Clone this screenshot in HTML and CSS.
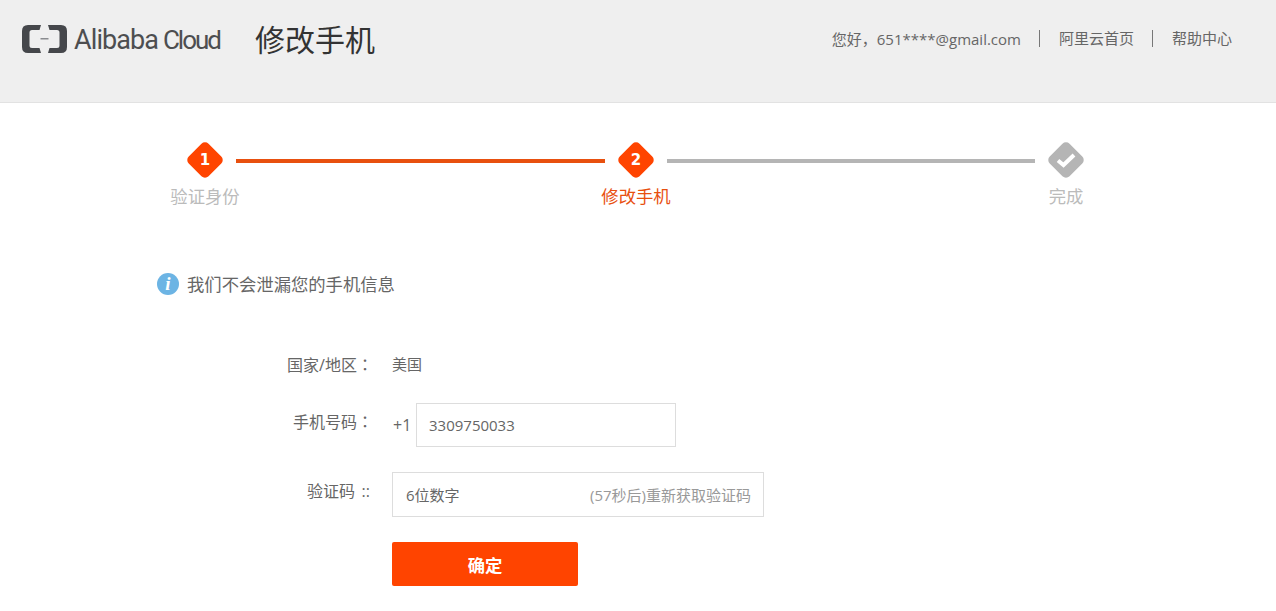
FILE: index.html
```html
<!DOCTYPE html>
<html lang="zh-CN">
<head>
  <meta charset="UTF-8" />
  <meta name="viewport" content="width=device-width, initial-scale=1" />
  <title>修改手机</title>
  <link rel="stylesheet" href="styles.css">
</head>
<body>
  <header class="header">
    <div class="brand">
      <svg class="logo-mark" viewBox="0 0 45 28" width="45" height="28" aria-hidden="true">
        <path fill="#45474b" d="M19 0H6Q0 0 0 6V22Q0 28 6 28H19L17.500 23H10Q7.500 23 7.500 20.500V7.500Q7.500 5 10 5H17.500Z" />
        <path fill="#45474b" d="M26 0H39Q45 0 45 6V22Q45 28 39 28H26L27.500 23H35Q37.500 23 37.500 20.500V7.500Q37.500 5 35 5H27.500Z" />
        <rect fill="#8a8c8f" x="18.500" y="13" width="8" height="1.500" />
      </svg>
      <span class="logo-text">Alibaba <span class="logo-cloud">Cloud</span></span>
      <h1 class="page-title">修改手机</h1>
    </div>
    <nav class="top-nav">
      <span class="top-nav-item">您好，651****@gmail.com</span>
      <a href="#" class="top-nav-item">阿里云首页</a>
      <a href="#" class="top-nav-item">帮助中心</a>
    </nav>
  </header>

  <main class="main">
    <div class="steps">
      <div class="step">
        <div class="diamond"><span>1</span></div>
        <div class="step-label">验证身份</div>
      </div>
      <div class="step-line active"></div>
      <div class="step">
        <div class="diamond"><span>2</span></div>
        <div class="step-label current">修改手机</div>
      </div>
      <div class="step-line last"></div>
      <div class="step todo">
        <div class="diamond">
          <svg viewBox="0 0 20 16" width="20" height="16" aria-hidden="true">
            <path fill="none" stroke="#fff" stroke-width="4" d="M2 8.500L7.500 13L18 3" />
          </svg>
        </div>
        <div class="step-label">完成</div>
      </div>
    </div>

    <p class="notice"><span class="info-icon">i</span>我们不会泄漏您的手机信息</p>

    <form class="form">
      <div class="form-row country-row">
        <label class="form-label">国家/地区<span class="colon" lang="zh-Hant">：</span></label>
        <span class="country">美国</span>
      </div>
      <div class="form-row">
        <label class="form-label field-label">手机号码<span class="colon" lang="zh-Hant">：</span></label>
        <span class="prefix">+1</span>
        <input class="phone-input" type="text" value="3309750033">
      </div>
      <div class="form-row">
        <label class="form-label code-label">验证码<span class="colon double">::</span></label>
        <div class="code-box">
          <input class="code-input" type="text" placeholder="6位数字">
          <span class="resend">(57秒后)重新获取验证码</span>
        </div>
      </div>
      <div class="form-row">
        <span class="form-label"></span>
        <button type="button" class="submit-button">确定</button>
      </div>
    </form>
  </main>
</body>
</html>
```

FILE: styles.css
```css
* {
  box-sizing: border-box;
}
body {
  margin: 0;
  font-family: 'Open Sans', 'Noto Sans CJK SC', sans-serif;
  color: #666;
  background-color: #fff;
}
.header {
  height: 103px;
  background-color: #efefef;
  border-bottom: 1px solid #e2e2e2;
  display: flex;
  justify-content: space-between;
  padding: 25px 44px 0 22px;
}
.brand {
  display: flex;
  align-items: flex-start;
}
.logo-mark {
  flex: none;
}
.logo-text {
  margin-left: 7px;
  width: 147px;
  font-family: Roboto, sans-serif;
  font-size: 27px;
  line-height: 30px;
  letter-spacing: -0.9px;
  word-spacing: -1px;
  white-space: nowrap;
  color: #4d4e50;
}
.logo-cloud {
  font-size: 26px;
  letter-spacing: -2px;
}
.page-title {
  margin: -5px 0 0 34px;
  font-size: 30px;
  line-height: 40px;
  font-weight: 400;
  color: #333;
}
.top-nav {
  display: flex;
  align-items: center;
  height: 27px;
}
.top-nav-item {
  font-size: 15px;
  color: #666;
  text-decoration: none;
  white-space: nowrap;
}
.top-nav-item + .top-nav-item {
  margin-left: 18px;
  padding-left: 19px;
  border-left: 1px solid #777;
  line-height: 17px;
}
.main {
  padding: 39px 0 25px;
}
.steps {
  display: flex;
  padding-left: 174px;
}
.step {
  width: 62px;
  flex: none;
  display: flex;
  flex-direction: column;
  align-items: center;
}
.diamond {
  width: 36px;
  height: 36px;
  position: relative;
  display: flex;
  align-items: center;
  justify-content: center;
  color: #fff;
  font-family: 'DejaVu Sans', sans-serif;
  font-size: 15px;
  font-weight: 700;
}
.diamond::before {
  content: "";
  position: absolute;
  left: 4px;
  top: 4px;
  width: 28px;
  height: 28px;
  border-radius: 5px;
  background-color: #ff4400;
  transform: rotate(45deg);
}
.diamond span,
.diamond svg {
  position: relative;
}
.todo .diamond::before {
  background-color: #b5b5b5;
}
.step-label {
  margin-top: 5px;
  font-size: 17.33px;
  line-height: 26px;
  color: #bbb;
  white-space: nowrap;
}
.step-label.current {
  color: #e8500f;
}
.step-line {
  width: 369px;
  height: 4px;
  flex: none;
  margin-top: 17px;
  background-color: #b5b5b5;
}
.step-line.last {
  width: 368px;
}
.step-line.active {
  background-color: #e8500f;
}
.notice {
  margin: 63px 0 0 157px;
  display: flex;
  align-items: center;
  font-size: 17.33px;
  line-height: 24px;
  color: #666;
}
.info-icon {
  width: 22px;
  height: 22px;
  margin-right: 8px;
  border-radius: 50%;
  background-color: #6cb4e4;
  color: #fff;
  display: flex;
  align-items: center;
  justify-content: center;
  font-family: 'Liberation Serif', serif;
  font-size: 19px;
  font-style: italic;
  font-weight: 700;
}
.form {
  margin-top: 57px;
  display: flex;
  flex-direction: column;
  gap: 25px;
}
.form-row {
  display: flex;
  align-items: flex-start;
}
.country-row {
  height: 25px;
}
.form-label {
  width: 373px;
  margin-right: 19px;
  flex: none;
  text-align: right;
  font-size: 16px;
  line-height: 22px;
  color: #666;
}
.field-label {
  margin-top: 7px;
}
.code-label {
  margin-top: 8px;
}
.colon {
  font-family: 'Noto Sans CJK TC', sans-serif;
}
.colon.double {
  display: inline-block;
  width: 18px;
  padding-right: 3px;
  font-family: 'Open Sans', sans-serif;
}
.country {
  font-size: 15px;
  line-height: 22px;
}
.prefix {
  width: 24px;
  flex: none;
  font-size: 16px;
  line-height: 44px;
  padding-left: 1px;
}
.phone-input {
  width: 260px;
  height: 44px;
  padding: 0 12px;
  border: 1px solid #ddd;
  outline: none;
  font-family: inherit;
  font-size: 15px;
  color: #666;
}
.code-box {
  width: 372px;
  height: 45px;
  padding: 0 12px 0 13px;
  border: 1px solid #ddd;
  display: flex;
  align-items: center;
  justify-content: space-between;
}
.code-input {
  width: 150px;
  padding: 0;
  border: 0;
  outline: none;
  font-family: inherit;
  font-size: 15px;
  color: #666;
}
.code-input::placeholder {
  color: #666;
  opacity: 1;
}
.resend {
  font-size: 15px;
  color: #999;
  white-space: nowrap;
}
.submit-button {
  width: 186px;
  height: 44px;
  border: 0;
  border-radius: 2px;
  background-color: #ff4400;
  color: #fff;
  font-family: inherit;
  font-size: 17.33px;
  font-weight: 700;
}
```
